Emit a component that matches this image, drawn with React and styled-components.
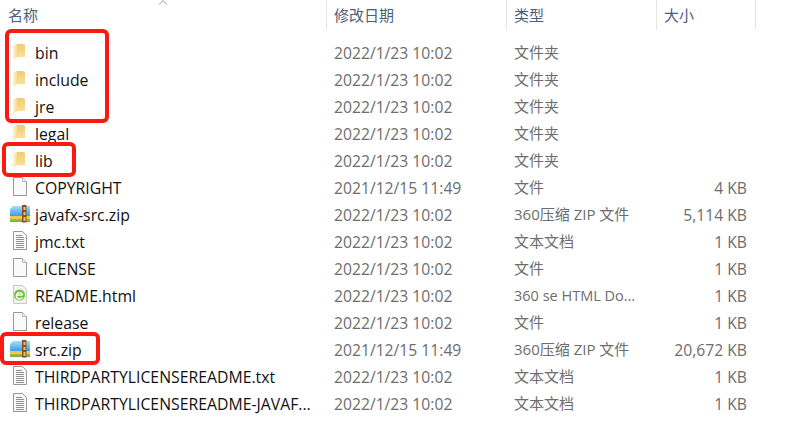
import styled, { createGlobalStyle } from "styled-components";

const GlobalStyle = createGlobalStyle`
  html, body {
    margin: 0;
    padding: 0;
    background: #fff;
  }
`;

const files = [
  { name: "bin", date: "2022/1/23 10:02", type: "文件夹", icon: "folder" },
  { name: "include", date: "2022/1/23 10:02", type: "文件夹", icon: "folder" },
  { name: "jre", date: "2022/1/23 10:02", type: "文件夹", icon: "folder" },
  { name: "legal", date: "2022/1/23 10:02", type: "文件夹", icon: "folder" },
  { name: "lib", date: "2022/1/23 10:02", type: "文件夹", icon: "folder" },
  { name: "COPYRIGHT", date: "2021/12/15 11:49", type: "文件", size: "4 KB", icon: "blank" },
  { name: "javafx-src.zip", date: "2022/1/23 10:02", type: "360压缩 ZIP 文件", size: "5,114 KB", icon: "zip" },
  { name: "jmc.txt", date: "2022/1/23 10:02", type: "文本文档", size: "1 KB", icon: "text" },
  { name: "LICENSE", date: "2022/1/23 10:02", type: "文件", size: "1 KB", icon: "blank" },
  { name: "README.html", date: "2022/1/23 10:02", type: "360 se HTML Do...", latin: true, size: "1 KB", icon: "html" },
  { name: "release", date: "2022/1/23 10:02", type: "文件", size: "1 KB", icon: "blank" },
  { name: "src.zip", date: "2021/12/15 11:49", type: "360压缩 ZIP 文件", size: "20,672 KB", icon: "zip" },
  { name: "THIRDPARTYLICENSEREADME.txt", date: "2022/1/23 10:02", type: "文本文档", size: "1 KB", icon: "text" },
  { name: "THIRDPARTYLICENSEREADME-JAVAF...", date: "2022/1/23 10:02", type: "文本文档", size: "1 KB", icon: "text" },
];

const FolderIcon = () => (
  <svg width="20" height="20" viewBox="0 0 20 20">
    <defs>
      <linearGradient id="fold" x1="0" y1="0" x2="1" y2="0">
        <stop offset="0" stopColor="#fff6d2" />
        <stop offset="1" stopColor="#f9dc8e" />
      </linearGradient>
      <linearGradient id="foldBack" x1="0" y1="0" x2="0" y2="1">
        <stop offset="0" stopColor="#f0cb72" />
        <stop offset="1" stopColor="#fae09a" />
      </linearGradient>
    </defs>
    <path d="M7 2h6l2 1v12H7z" fill="url(#foldBack)" />
    <path d="M3 3.500L7 2v13l-4 3z" fill="url(#fold)" />
  </svg>
);

const BlankIcon = () => (
  <svg width="20" height="20" viewBox="0 0 20 20">
    <path d="M3.500 .5h9l4 4v14h-13z" fill="#fafafa" stroke="#979797" />
    <path d="M12.500 .5v4h4" fill="#f0f0f0" stroke="#b8b8b8" />
  </svg>
);

const TextIcon = () => (
  <svg width="20" height="20" viewBox="0 0 20 20">
    <path d="M3.500 .5h9l4 4v14h-13z" fill="#f8f8f8" stroke="#979797" />
    <path d="M6 4.500h6M6 6.500h8M6 8.500h8M6 10.500h8M6 12.500h8M6 14.500h8M6 16.500h8" stroke="#909090" />
  </svg>
);

const HtmlIcon = () => (
  <svg width="20" height="20" viewBox="0 0 20 20">
    <path d="M3.500 .5h9l4 4v14h-13z" fill="#f2f2f2" stroke="#c8c8c8" />
    <circle cx="9.500" cy="10" r="5.500" fill="#6fc62a" />
    <path d="M6.500 10h6M12.300 12.400a3.200 3.200 0 1 1 .3-2.400" fill="none" stroke="#fff" strokeWidth="1.500" />
  </svg>
);

const ZipIcon = () => (
  <svg width="20" height="20" viewBox="0 0 20 20">
    <defs>
      <linearGradient id="zip" x1="0" y1="0" x2="0" y2="1">
        <stop offset="0" stopColor="#a8dcfa" />
        <stop offset="0.62" stopColor="#3a9dee" />
        <stop offset="0.63" stopColor="#f6c655" />
        <stop offset="0.8" stopColor="#f6c655" />
        <stop offset="0.81" stopColor="#96c84a" />
        <stop offset="1" stopColor="#76ad34" />
      </linearGradient>
    </defs>
    <path d="M0 5l3-3h17v16H0z" fill="url(#zip)" />
    <path d="M12 1h4.500v17.500H12z" fill="#85531f" />
    <path d="M13.500 3h2v3h-2zM13.500 8h2v3h-2zM13.500 13h2v4h-2z" fill="#e6c27a" />
  </svg>
);

const icons = {
  folder: FolderIcon,
  blank: BlankIcon,
  text: TextIcon,
  html: HtmlIcon,
  zip: ZipIcon,
};

const Page = styled.div`
  position: relative;
  width: 789px;
  height: 433px;
  overflow: hidden;
  background: #fff;
  font-family: "Open Sans", "Noto Sans CJK SC", sans-serif;
  font-size: 15.7px;
`;

const Columns = `
  display: grid;
  grid-template-columns: 326px 180px 150px 100px;
`;

const Header = styled.div`
  ${Columns}
  height: 30px;
  color: #4c607a;
  font-size: 15px;
`;

const HeaderCell = styled.div`
  display: flex;
  align-items: center;
  height: 30px;
  padding: 0 0 2px 7px;
  box-sizing: border-box;
  border-left: 1px solid #e5e5e5;

  &:first-child {
    padding-left: 8px;
    border-left: none;
  }

  &:last-child {
    border-right: 1px solid #e5e5e5;
  }
`;

const SortArrow = styled.svg`
  position: absolute;
  left: 158px;
  top: 0;
`;

const Rows = styled.div`
  padding-top: 9px;
`;

const Row = styled.div`
  ${Columns}
  height: 27px;
  align-items: center;
  color: #6d6d6d;
`;

const NameCell = styled.div`
  display: flex;
  align-items: center;
  gap: 5px;
  padding-left: 10px;
  color: #111;
  font-size: 15.8px;
  white-space: nowrap;
`;

const IconBox = styled.span`
  display: flex;
  width: 20px;
  height: 20px;
  flex: none;
  margin-top: -2px;
`;

const Cell = styled.div`
  padding-left: 8px;
  white-space: nowrap;
`;

const TypeCell = styled(Cell)`
  font-size: ${(p) => (p.$latin ? "14.5px" : "15px")};
  margin-top: ${(p) => (p.$latin ? "0" : "-2px")};
`;

const SizeCell = styled.div`
  padding-right: 9px;
  text-align: right;
  white-space: nowrap;
`;

const Highlight = styled.div`
  position: absolute;
  left: ${(p) => p.$left}px;
  top: ${(p) => p.$top}px;
  width: ${(p) => p.$width}px;
  height: ${(p) => p.$height}px;
  box-sizing: border-box;
  border: 4px solid #fb1a10;
  border-radius: 6px;
`;

export default function App() {
  return (
    <Page>
      <GlobalStyle />
      <Header>
        <HeaderCell>名称</HeaderCell>
        <HeaderCell>修改日期</HeaderCell>
        <HeaderCell>类型</HeaderCell>
        <HeaderCell>大小</HeaderCell>
      </Header>
      <SortArrow width="10" height="5" viewBox="0 0 10 5">
        <path d="M1 4.500L5 .5l4 4" fill="none" stroke="#9a9a9a" />
      </SortArrow>
      <Rows>
        {files.map((f) => {
          const Icon = icons[f.icon];
          return (
            <Row key={f.name}>
              <NameCell>
                <IconBox>
                  <Icon />
                </IconBox>
                {f.name}
              </NameCell>
              <Cell>{f.date}</Cell>
              <TypeCell $latin={f.latin}>{f.type}</TypeCell>
              <SizeCell>{f.size}</SizeCell>
            </Row>
          );
        })}
      </Rows>
      <Highlight $left={5} $top={29} $width={104} $height={94} />
      <Highlight $left={2} $top={142} $width={74} $height={35} />
      <Highlight $left={0} $top={332} $width={100} $height={33} />
    </Page>
  );
}
